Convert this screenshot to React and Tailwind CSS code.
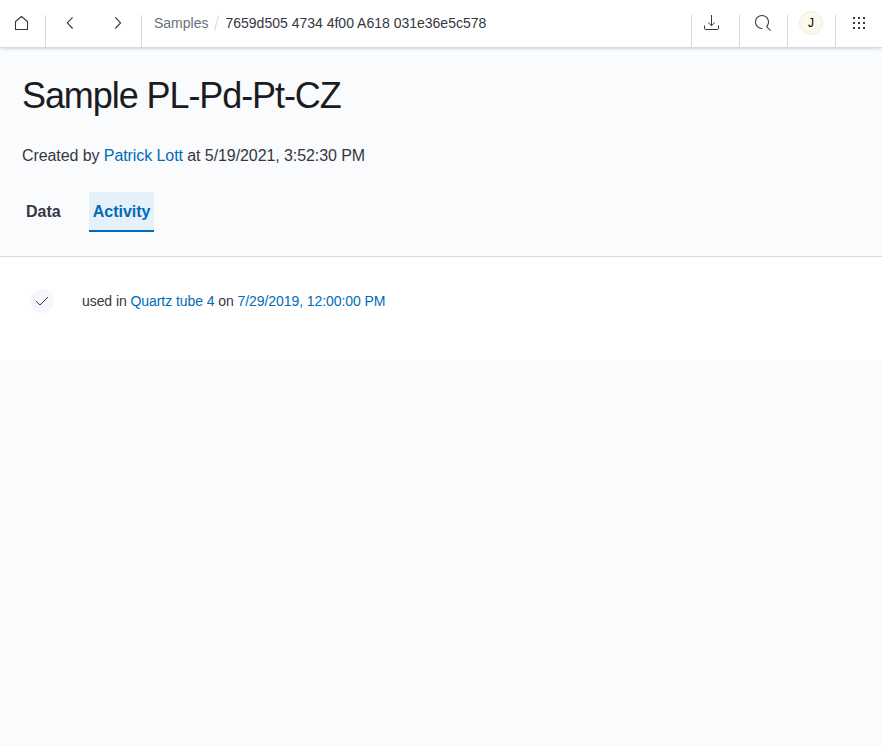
import React from "react";

const Icon = ({ children }) => (
  <svg width="16" height="16" viewBox="0 0 16 16" fill="none" stroke="currentColor" className="block shrink-0 overflow-visible">
    {children}
  </svg>
);

const Divider = () => <div className="h-8 w-px shrink-0 self-end bg-[#d3dae6]" />;

const HeaderButton = ({ label, className = "", children }) => (
  <button aria-label={label} className={"flex h-[46px] shrink-0 items-center justify-center text-[#343741] " + className}>
    {children}
  </button>
);

const DOTS = [2, 7, 12];

function Header() {
  return (
    <header className="relative flex h-12 border-b border-[#d3dae6] bg-white shadow-[0_2px_2px_-1px_rgba(152,162,179,0.3),0_1px_5px_-2px_rgba(152,162,179,0.3)]">
      <HeaderButton label="Home" className="w-[45px] pr-px">
        <Icon>
          <path d="M1.5 6.5v8h12v-8l-6-5z" strokeWidth="1.1" strokeLinejoin="round" />
        </Icon>
      </HeaderButton>
      <Divider />
      <HeaderButton label="Back" className="w-12">
        <Icon>
          <path d="M10.6 2.3 5.3 7.9l5.3 5.6" strokeWidth="1.1" strokeLinejoin="round" />
        </Icon>
      </HeaderButton>
      <HeaderButton label="Forward" className="w-[47px] pr-px">
        <Icon>
          <path d="m6.3 2.3 5.3 5.6-5.3 5.6" strokeWidth="1.1" strokeLinejoin="round" />
        </Icon>
      </HeaderButton>
      <Divider />
      <nav className="flex h-[46px] items-center pl-3 text-sm">
        <a className="text-[#69707d]">Samples</a>
        <span className="mx-2 h-4 w-px rotate-15 bg-[#d3dae6]" />
        <span className="text-[#343741]">7659d505 4734 4f00 A618 031e36e5c578</span>
      </nav>
      <div className="ml-auto flex">
        <Divider />
        <HeaderButton label="Download" className="w-[47px] pr-[7px]">
          <Icon>
            <path d="M7.5 0v10.5M4.2 7.5l3.3 3.2 3.3-3.2M.5 10.5v2.7c0 .9.4 1.3 1.3 1.3h11.4c.9 0 1.3-.4 1.3-1.3v-2.7" />
          </Icon>
        </HeaderButton>
        <Divider />
        <HeaderButton label="Search" className="w-[47px] pr-px">
          <Icon>
            <path
              fill="currentColor"
              stroke="none"
              d="M11.271 11.978l3.872 3.873a.502.502 0 00.708 0 .502.502 0 000-.708l-3.565-3.564c2.38-2.747 2.267-6.923-.342-9.532-2.73-2.73-7.17-2.73-9.898 0-2.728 2.729-2.728 7.17 0 9.9a6.955 6.955 0 004.949 2.05.5.5 0 000-1 5.96 5.96 0 01-4.242-1.757 6.01 6.01 0 010-8.486 6.004 6.004 0 018.484 0 6.01 6.01 0 010 8.486.5.5 0 00.034.738z"
            />
          </Icon>
        </HeaderButton>
        <Divider />
        <HeaderButton label="Account" className="w-[47px] pr-px">
          <span className="flex size-6 items-center justify-center rounded-full border border-[#efece2] bg-[#fbf8ec] text-xs text-black">J</span>
        </HeaderButton>
        <Divider />
        <HeaderButton label="Apps" className="w-[46px]">
          <Icon>
            {DOTS.map((y) => DOTS.map((x) => <rect key={`${x}-${y}`} x={x} y={y} width="2" height="2" fill="currentColor" stroke="none" />))}
          </Icon>
        </HeaderButton>
      </div>
    </header>
  );
}

export default function App() {
  return (
    <div className="min-h-screen bg-[#fafbfd] font-['Liberation_Sans',Arial,sans-serif] text-[#343741]">
      <Header />
      <section className="h-[209px] border-b border-[#d3dae6] px-[22px] pt-6">
        <h1 className="text-4xl leading-12 tracking-[-0.03em] text-[#1a1c21]">Sample PL-Pd-Pt-CZ</h1>
        <p className="mt-6 text-base leading-6 tracking-[-0.005em]">
          Created by <a className="text-[#006bb8]">Patrick Lott</a> at 5/19/2021, 3:52:30 PM
        </p>
        <div className="mt-6 flex gap-6 text-base font-bold">
          <button className="h-10 px-1">Data</button>
          <button className="h-10 border-b-2 border-[#006bb8] bg-[#e6f0f8] px-1 pt-0.5 text-[#006bb8]">Activity</button>
        </div>
      </section>
      <main className="flex h-[104px] bg-white pl-[30px] pt-8">
        <div className="flex size-6 items-center justify-center rounded-full bg-[#f5f7fc]">
          <Icon>
            <path d="M2.3 8.5 6 12l7.8-7.8" strokeLinecap="round" strokeLinejoin="round" />
          </Icon>
        </div>
        <p className="ml-7 text-sm leading-6 tracking-[-0.005em]">
          used in <a className="text-[#006bb8]">Quartz tube 4</a> on <a className="text-[#006bb8]">7/29/2019, 12:00:00 PM</a>
        </p>
      </main>
    </div>
  );
}
